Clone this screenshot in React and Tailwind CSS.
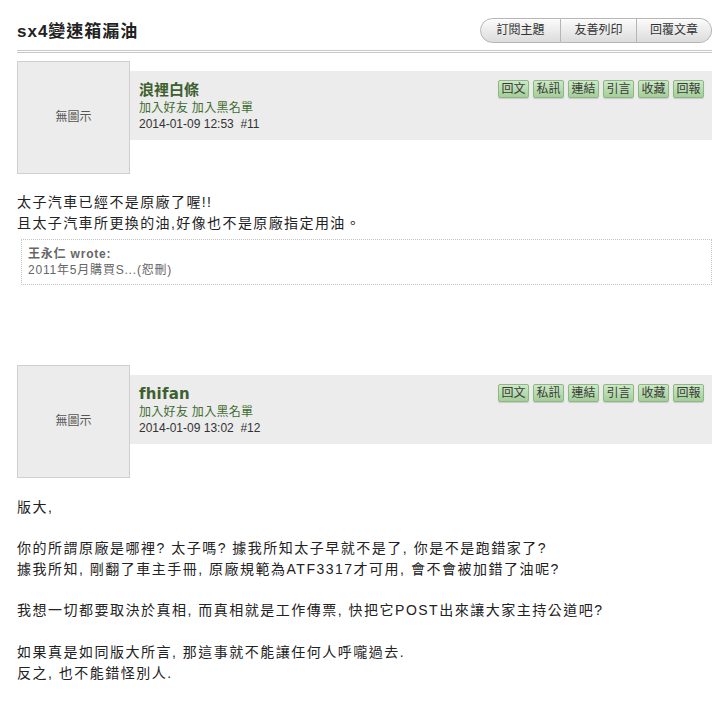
const font = "font-['Liberation_Sans','Noto_Sans_CJK_TC',sans-serif]";

function TopButtons() {
  const items = [
    { label: "訂閱主題", cls: "w-[81px] rounded-l-full" },
    { label: "友善列印", cls: "w-[76px] border-l-0" },
    { label: "回覆文章", cls: "w-[75px] border-l-0 rounded-r-full" },
  ];
  return (
    <div className="flex">
      {items.map((b) => (
        <div
          key={b.label}
          className={`h-[25px] flex items-center justify-center border border-[#b5b5b5] bg-gradient-to-b from-[#fbfbfb] to-[#dcdcdc] text-[12px] text-[#333] shadow-[inset_0_1px_0_#fff] ${b.cls}`}
        >
          {b.label}
        </div>
      ))}
    </div>
  );
}

function GreenButtons() {
  const labels = ["回文", "私訊", "連結", "引言", "收藏", "回報"];
  return (
    <div className="flex gap-[4px]">
      {labels.map((l) => (
        <div
          key={l}
          className="w-[31px] h-[18px] flex items-center justify-center rounded-[2px] border border-[#8db884] bg-gradient-to-b from-[#cde8c6] to-[#a3cf99] text-[12px] leading-none text-[#3a3a3a] shadow-[0_1px_1px_rgba(0,0,0,0.15)]"
        >
          {l}
        </div>
      ))}
    </div>
  );
}

function PostHead({ name, date, serifName }) {
  return (
    <div className="flex">
      <div className="w-[113px] h-[113px] shrink-0 border border-[#cfcfcf] bg-[#ececec] flex items-center justify-center text-[12px] text-[#555]">
        無圖示
      </div>
      <div className="flex-1 mt-[10px] h-[69px] bg-[#ececec] pl-[9px] pr-[8px] pt-[9px] flex justify-between">
        <div>
          <div
            className={`text-[15px] leading-[20px] font-bold text-[#3e5f2f] ${
              serifName ? "font-['DejaVu_Sans',sans-serif] tracking-[0.2px]" : ""
            }`}
          >
            {name}
          </div>
          <div className="text-[12px] leading-[16px] text-[#3f6d32] tracking-[0.3px]">
            加入好友 加入黑名單
          </div>
          <div className="text-[12px] leading-[16px] text-[#333]">{date}</div>
        </div>
        <GreenButtons />
      </div>
    </div>
  );
}

export default function App() {
  return (
    <div className={`min-h-screen bg-white pl-[17px] pr-[8px] pt-[16px] ${font}`}>
      <div className="flex justify-between items-center pb-[5px] border-b-[3px] border-double border-[#c8c8c8]">
        <h1 className="text-[17px] font-bold text-[#222] tracking-[1px] pt-[3px]">sx4變速箱漏油</h1>
        <TopButtons />
      </div>

      <div className="mt-[8px]">
        <PostHead name="浪裡白條" date={"2014-01-09 12:53\u00a0\u00a0#11"} />
        <div className="mt-[18px] text-[14px] leading-[21px] text-[#222] tracking-[1.4px]">
          <p>太子汽車已經不是原廠了喔!!</p>
          <p>且太子汽車所更換的油,好像也不是原廠指定用油。</p>
        </div>
        <div className="mt-[5px] ml-[4px] border border-dotted border-[#c4c4c4] pl-[6px] pt-[6px] pb-[6px] text-[12px] leading-[16px] text-[#666] tracking-[0.8px]">
          <div className="font-bold">王永仁 wrote:</div>
          <div>2011年5月購買S...(恕刪)</div>
        </div>
      </div>

      <div className="mt-[80px]">
        <PostHead name="fhifan" date={"2014-01-09 13:02\u00a0\u00a0#12"} serifName />
        <div className="mt-[19px] text-[14px] leading-[20.75px] text-[#222] tracking-[1.5px]">
          <p>版大,</p>
          <p>&nbsp;</p>
          <p>你的所謂原廠是哪裡? 太子嗎? 據我所知太子早就不是了, 你是不是跑錯家了?</p>
          <p>據我所知, 剛翻了車主手冊, 原廠規範為ATF3317才可用, 會不會被加錯了油呢?</p>
          <p>&nbsp;</p>
          <p>我想一切都要取決於真相, 而真相就是工作傳票, 快把它POST出來讓大家主持公道吧?</p>
          <p>&nbsp;</p>
          <p>如果真是如同版大所言, 那這事就不能讓任何人呼嚨過去.</p>
          <p>反之, 也不能錯怪別人.</p>
        </div>
      </div>
    </div>
  );
}
